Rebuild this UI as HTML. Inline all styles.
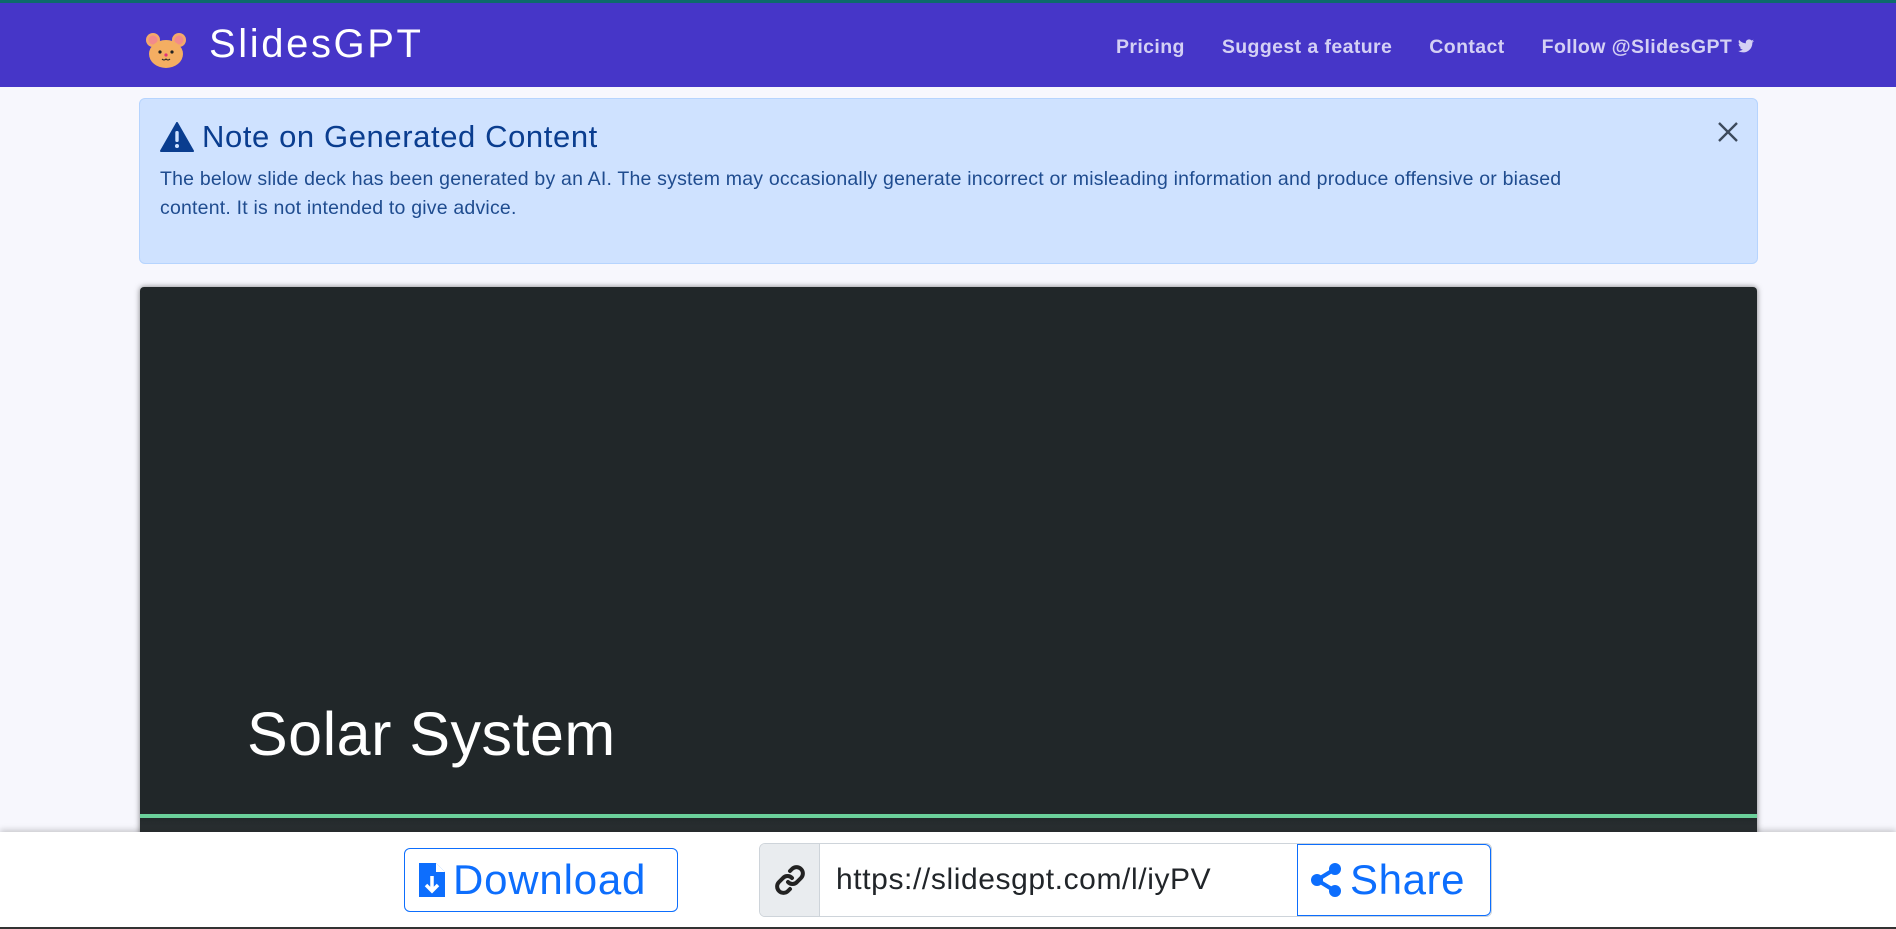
<!DOCTYPE html>
<html><head><meta charset="utf-8"><style>
*{box-sizing:border-box;margin:0;padding:0}
body{width:1896px;height:929px;overflow:hidden;background:#f7f7fd;font-family:"Liberation Sans",sans-serif;position:relative}
.top{position:absolute;left:0;top:0;width:1896px;height:3px;background:#0d6b6b}
nav{position:absolute;left:0;top:3px;width:1896px;height:84px;background:#4636c8}
.brand{position:absolute;left:209px;top:19px;color:#fff;font-size:40px;letter-spacing:2.6px}
.links{position:absolute;right:142px;top:33px;display:flex;gap:37px;color:#d4d0f4;font-weight:bold;font-size:19.5px;letter-spacing:0.4px}
.alert{position:absolute;left:139px;top:98px;width:1619px;height:166px;background:#cfe2ff;border:1px solid #b6d4fe;border-radius:6px}
.alert h2{position:absolute;left:20px;top:20px;font-size:31px;font-weight:normal;color:#0a3d8f;display:flex;align-items:center;gap:8px;letter-spacing:0.6px}
.alert p{position:absolute;left:20px;top:66px;width:1420px;font-size:19.5px;line-height:29px;color:#1f4c8f;letter-spacing:0.2px}
.x{position:absolute;right:18px;top:22px}
.slide{position:absolute;left:140px;top:287px;width:1617px;height:560px;background:#212729;border-radius:4px;box-shadow:0 0 6px rgba(0,0,0,.5)}
.slide h1{position:absolute;left:107px;top:412px;color:#fff;font-weight:normal;font-size:61px;letter-spacing:0.5px}
.line{position:absolute;left:0;top:527px;width:100%;height:4px;background:#6bd09a}
.under{position:absolute;left:0;top:531px;width:100%;height:29px;background:linear-gradient(#22282a,#383d40)}
.bar{position:absolute;left:0;top:832px;width:1896px;height:97px;background:#fff;box-shadow:0 -2px 6px rgba(0,0,0,.2);border-bottom:2px solid #333}
.dl{position:absolute;left:404px;top:16px;width:274px;height:64px;border:1px solid #0d6efd;border-radius:6px;color:#0d6efd;font-size:42px;letter-spacing:0.8px;display:flex;align-items:center;padding-left:14px;gap:8px}
.ig{position:absolute;left:759px;top:11px;width:733px;height:74px;border:1px solid #ced4da;border-radius:6px;overflow:hidden;display:flex}
.ig .ic{width:60px;background:#e9ecef;border-right:1px solid #ced4da;display:flex;align-items:center;justify-content:center}
.ig .url{flex:1;display:flex;align-items:center;padding-left:16px;font-size:30px;letter-spacing:0.6px;color:#212529}
.ig .sh{width:194px;border:1px solid #0d6efd;border-radius:0 6px 6px 0;color:#0d6efd;font-size:42px;letter-spacing:0.6px;display:flex;align-items:center;padding-left:12px;gap:8px}
</style></head><body>
<div class="top"></div>
<nav>
<svg style="position:absolute;left:145px;top:28px" width="42" height="38" viewBox="0 0 42 38"><circle cx="8" cy="9" r="7" fill="#f4a96a"/><circle cx="34" cy="9" r="7" fill="#f4a96a"/><circle cx="8" cy="9" r="4.5" fill="#f28b8b"/><circle cx="34" cy="9" r="4.5" fill="#f28b8b"/><ellipse cx="21" cy="23" rx="17" ry="14" fill="#f4ae62"/><circle cx="15" cy="21" r="1.6" fill="#222"/><circle cx="27" cy="21" r="1.6" fill="#222"/><circle cx="21" cy="24" r="1.6" fill="#e0307a"/><path d="M17 28q2 2 4 0q2 2 4 0" stroke="#222" fill="none" stroke-width="1"/></svg>
<div class="brand">SlidesGPT</div>
<div class="links"><span>Pricing</span><span>Suggest a feature</span><span>Contact</span><span>Follow @SlidesGPT <svg width="16" height="14" viewBox="0 0 24 20"><path d="M24 2.4a10 10 0 01-2.8.8A5 5 0 0023.3.5a10 10 0 01-3.1 1.2A4.9 4.9 0 0011.8 6 14 14 0 011.7.9a4.9 4.9 0 001.5 6.6 5 5 0 01-2.2-.6 4.9 4.9 0 003.9 4.9 5 5 0 01-2.2.1 4.9 4.9 0 004.6 3.4A9.9 9.9 0 010 17.4 14 14 0 007.5 19.6c9.1 0 14-7.5 14-14v-.6A10 10 0 0024 2.4z" fill="#d4d0f4"/></svg></span></div>
</nav>
<div class="alert">
<h2><svg width="34" height="30" viewBox="0 0 34 30"><path d="M17 1L33 29H1z" fill="#0a3d8f" stroke="#0a3d8f" stroke-width="2" stroke-linejoin="round"/><rect x="15.3" y="9" width="3.4" height="11" rx="1.5" fill="#cfe2ff"/><circle cx="17" cy="24" r="2" fill="#cfe2ff"/></svg>Note on Generated Content</h2>
<p>The below slide deck has been generated by an AI. The system may occasionally generate incorrect or misleading information and produce offensive or biased content. It is not intended to give advice.</p>
<svg class="x" width="22" height="22" viewBox="0 0 22 22"><path d="M2 2L20 20M20 2L2 20" stroke="#3d4a5c" stroke-width="2.4"/></svg>
</div>
<div class="slide"><h1>Solar System</h1><div class="line"></div><div class="under"></div></div>
<div class="bar">
<div class="dl"><svg width="26" height="38" viewBox="0 0 26 38"><path d="M0 2h17l9 9v25H0z" fill="#0d6efd"/><path d="M17 2v9h9" fill="#fff"/><path d="M13 15v15M7 24l6 6 6-6" stroke="#fff" stroke-width="3.5" fill="none"/></svg>Download</div>
<div class="ig"><div class="ic"><svg width="30" height="30" viewBox="0 0 30 30"><path d="M13 17a6 6 0 009 0l4-4a6 6 0 00-9-9l-2 2M17 13a6 6 0 00-9 0l-4 4a6 6 0 009 9l2-2" stroke="#222" stroke-width="4" fill="none" stroke-linecap="round"/></svg></div><div class="url">https://slidesgpt.com/l/iyPV</div><div class="sh"><svg width="32" height="36" viewBox="0 0 32 36"><circle cx="25" cy="7" r="6" fill="#0d6efd"/><circle cx="7" cy="18" r="6" fill="#0d6efd"/><circle cx="25" cy="29" r="6" fill="#0d6efd"/><path d="M25 7L7 18l18 11" stroke="#0d6efd" stroke-width="4" fill="none"/></svg>Share</div></div>
</div>
</body></html>
